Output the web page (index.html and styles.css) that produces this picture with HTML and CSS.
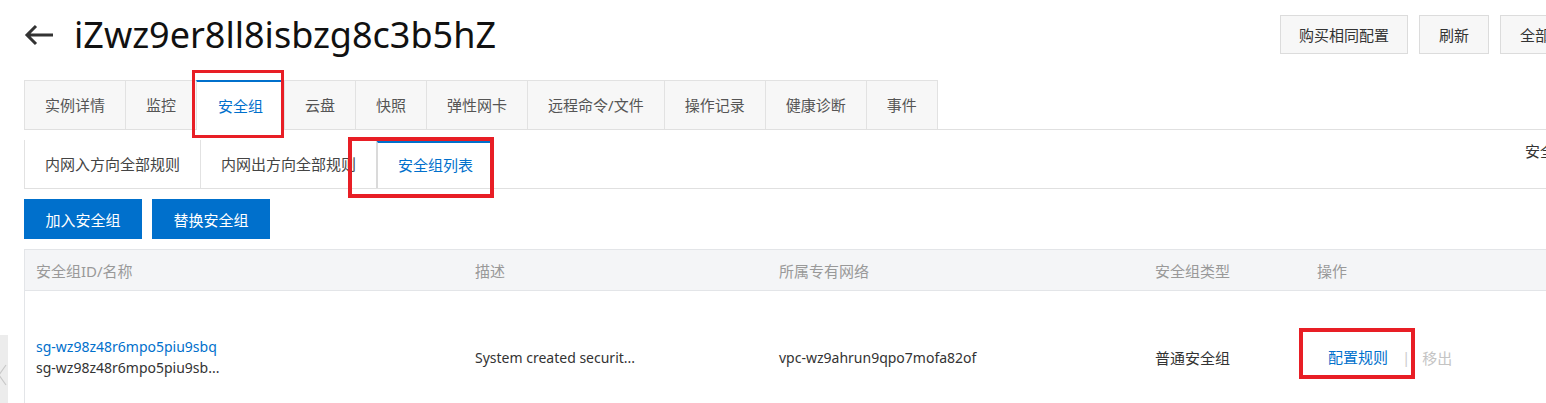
FILE: index.html
```html
<!DOCTYPE html>
<html lang="zh-CN">
<head>
<meta charset="utf-8">
<title>实例详情 - 安全组</title>
<link rel="stylesheet" href="styles.css">
</head>
<body>
<div class="page">
  <header class="header">
    <span class="back" aria-label="返回">
      <svg width="30" height="22" viewBox="0 0 30 22"><path d="M29 11H3M12 2L3 11L12 20" fill="none" stroke="#333" stroke-width="3"/></svg>
    </span>
    <h1 class="title">iZwz9er8ll8isbzg8c3b5hZ</h1>
    <div class="actions">
      <button class="btn">购买相同配置</button>
      <button class="btn">刷新</button>
      <button class="btn">全部操作</button>
    </div>
  </header>

  <nav class="tabs">
    <div class="tab">实例详情</div>
    <div class="tab">监控</div>
    <div class="tab active">安全组<span class="mark mark-tab"></span></div>
    <div class="tab">云盘</div>
    <div class="tab">快照</div>
    <div class="tab">弹性网卡</div>
    <div class="tab">远程命令/文件</div>
    <div class="tab">操作记录</div>
    <div class="tab">健康诊断</div>
    <div class="tab">事件</div>
  </nav>

  <nav class="subtabs">
    <div class="subtab">内网入方向全部规则</div>
    <div class="subtab">内网出方向全部规则</div>
    <div class="subtab active">安全组列表<span class="mark mark-sub"></span></div>
    <div class="sub-extra">安全组帮助</div>
  </nav>

  <div class="toolbar">
    <button class="primary">加入安全组</button>
    <button class="primary">替换安全组</button>
  </div>

  <div class="table">
    <div class="thead">
      <div class="cell">安全组ID/名称</div>
      <div class="cell">描述</div>
      <div class="cell">所属专有网络</div>
      <div class="cell">安全组类型</div>
      <div class="cell">操作</div>
    </div>
    <div class="trow">
      <div class="cell">
        <a class="link">sg-wz98z48r6mpo5piu9sbq</a>
        <div class="sub">sg-wz98z48r6mpo5piu9sb...</div>
      </div>
      <div class="cell">System created securit...</div>
      <div class="cell">vpc-wz9ahrun9qpo7mofa82of</div>
      <div class="cell">普通安全组</div>
      <div class="cell ops">
        <a class="link op-link">配置规则<span class="mark mark-op"></span></a>
        <span class="sep">|</span>
        <span class="disabled">移出</span>
      </div>
    </div>
  </div>
</div>
<div class="side-handle">
  <svg width="10" height="22" viewBox="0 0 10 22"><path d="M8 1L1 11L8 21" fill="none" stroke="#c8c8c8" stroke-width="1.2"/></svg>
</div>
</body>
</html>
```

FILE: styles.css
```css
html, body {
  margin: 0;
  padding: 0;
  overflow: hidden;
  background: #fff;
}
body {
  font-family: "Noto Sans", "Noto Sans CJK SC", sans-serif;
  font-size: 15px;
  color: #333;
  position: relative;
  height: 403px;
}
.page {
  width: 1600px;
  padding-left: 24px;
  box-sizing: border-box;
}
.header {
  display: flex;
  align-items: center;
  height: 39px;
  margin-top: 15px;
}
.back {
  display: flex;
  width: 30px;
}
.title {
  margin: 0 0 0 20px;
  font-family: "Noto Sans", sans-serif;
  font-weight: 400;
  font-size: 36px;
  line-height: 39px;
  color: #111;
}
.actions {
  margin-left: auto;
  display: flex;
  gap: 11px;
}
.btn {
  height: 39px;
  padding: 0 19px;
  font: inherit;
  font-size: 15px;
  color: #333;
  background: #f7f7f7;
  border: 1px solid #dcdcdc;
  box-sizing: border-box;
}
.btn:first-child {
  padding: 0 18px;
}
.tabs {
  display: flex;
  margin-top: 26px;
  border-bottom: 1px solid #e0e0e0;
}
.tab {
  position: relative;
  height: 48px;
  line-height: 48px;
  padding: 0 20px;
  background: #f7f7f7;
  border-top: 1px solid #e2e2e2;
  border-left: 1px solid #e2e2e2;
  color: #555;
}
.tab:nth-child(10) {
  border-right: 1px solid #e2e2e2;
}
.tab.active {
  background: #fff;
  border-top: 2px solid #0070cc;
  height: 48px;
  margin-bottom: -1px;
  padding: 0 21px;
  color: #0070cc;
}
.subtabs {
  position: relative;
  display: flex;
  margin-top: 10px;
  border-bottom: 1px solid #e0e0e0;
  height: 48px;
}
.subtab {
  position: relative;
  height: 48px;
  line-height: 48px;
  padding: 0 20px;
  border-left: 1px solid #e2e2e2;
  color: #444;
  box-sizing: border-box;
}
.subtab.active {
  border-left: 2px solid #dadada;
  border-top: 3px solid #0070cc;
  border-right: 1px solid #e2e2e2;
  line-height: 45px;
  color: #0070cc;
}
.sub-extra {
  margin-left: auto;
  padding-top: 1px;
  line-height: 20px;
  color: #333;
}
.toolbar {
  display: flex;
  gap: 10px;
  margin-top: 10px;
}
.primary {
  height: 40px;
  padding: 0 21.5px;
  font: inherit;
  font-size: 15px;
  color: #fff;
  background: #0070cc;
  border: none;
}
.table {
  margin-top: 10px;
  border-left: 1px solid #e3e5e8;
}
.thead, .trow {
  display: grid;
  grid-template-columns: 439px 304px 376px 162px 1fr;
  align-items: center;
}
.thead {
  height: 42px;
  background: #f4f5f7;
  border-top: 1px solid #e3e5e8;
  border-bottom: 1px solid #e3e5e8;
  box-sizing: border-box;
  color: #999;
}
.trow {
  height: 132px;
  color: #333;
  font-size: 14px;
}
.trow .cell:nth-child(4) {
  font-size: 15px;
}
.cell {
  padding-left: 11px;
  white-space: nowrap;
}
.link {
  color: #0070cc;
  text-decoration: none;
  display: block;
  line-height: 21px;
}
.sub {
  line-height: 21px;
}
.ops {
  display: flex;
  align-items: center;
  font-size: 15px;
}
.op-link {
  position: relative;
  margin-left: 11px;
  display: inline-block;
}
.sep {
  color: #ccc;
  margin: 0 12px 0 14px;
}
.disabled {
  color: #c4c4c4;
}
.mark {
  position: absolute;
  border: 3px solid #e81e25;
  pointer-events: none;
}
.mark-tab {
  left: -5px;
  top: -12px;
  width: 86px;
  height: 62px;
}
.mark-sub {
  left: -30px;
  top: -6px;
  width: 138px;
  height: 53px;
  border-width: 4px;
}
.mark-op {
  left: -29px;
  top: -19px;
  width: 108px;
  height: 43px;
  border-width: 4px;
}
.side-handle {
  position: absolute;
  left: -20px;
  top: 335px;
  width: 28px;
  height: 80px;
  background: #ececec;
  display: flex;
  align-items: center;
  justify-content: flex-end;
}
```
